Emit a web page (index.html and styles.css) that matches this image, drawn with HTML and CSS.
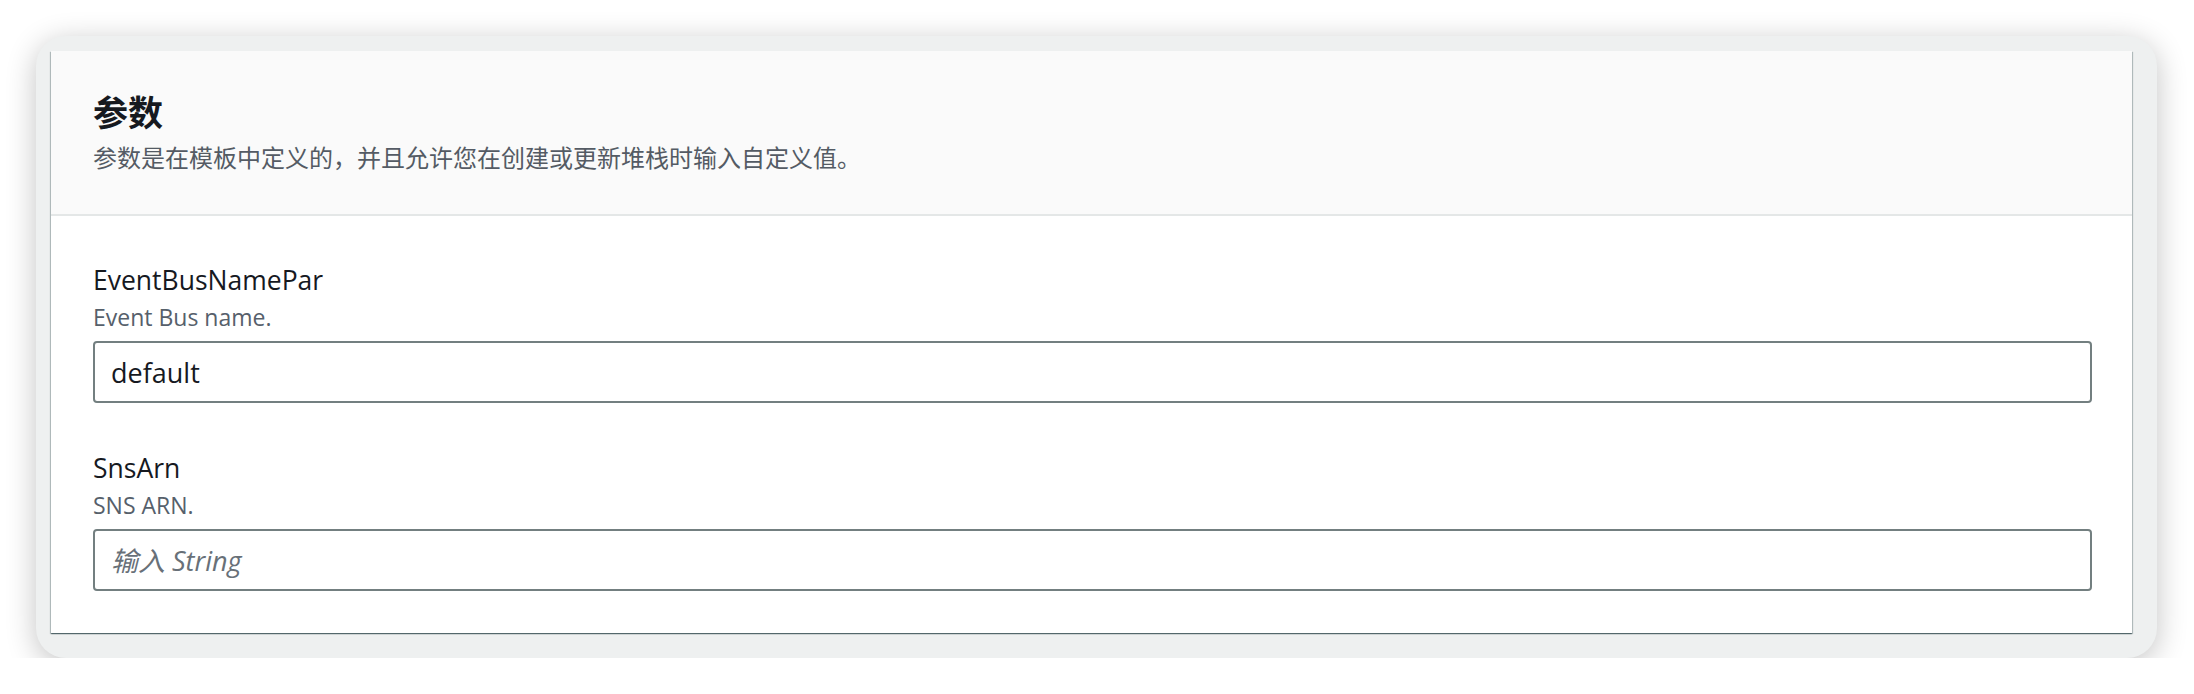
FILE: index.html
```html
<!DOCTYPE html>
<html lang="zh-CN">
<head>
<meta charset="utf-8">
<title>参数</title>
<link rel="stylesheet" href="styles.css">
</head>
<body>
<div class="frame">
  <section class="card">
    <header class="card-header">
      <h2 class="card-title">参数</h2>
      <p class="card-desc">参数是在模板中定义的，并且允许您在创建或更新堆栈时输入自定义值。</p>
    </header>
    <div class="card-body">
      <div class="field">
        <label class="field-label" for="p1">EventBusNamePar</label>
        <div class="field-desc">Event Bus name.</div>
        <input class="field-input" id="p1" type="text" value="default">
      </div>
      <div class="field">
        <label class="field-label" for="p2">SnsArn</label>
        <div class="field-desc">SNS ARN.</div>
        <input class="field-input" id="p2" type="text" placeholder="输入 String">
      </div>
    </div>
  </section>
</div>
</body>
</html>
```
FILE: styles.css
```css
html, body {
  margin: 0;
  padding: 0;
  background: #ffffff;
}

body {
  font-family: "Open Sans", "Noto Sans CJK SC", sans-serif;
  color: #16191f;
}

.frame {
  margin: 36px 37px 0 36px;
  height: 622px;
  box-sizing: border-box;
  padding: 15px 25px 25px 15px;
  background: #eef0f0;
  border-radius: 30px;
  box-shadow: 0 6px 30px rgba(0, 0, 0, 0.24);
}

.card {
  background: #ffffff;
  box-shadow: 0 1px 1px 0 rgba(0, 28, 36, 0.45),
              1px 1px 1px 0 rgba(0, 28, 36, 0.2),
              -1px 1px 1px 0 rgba(0, 28, 36, 0.2);
}

.card-header {
  background: #fafafa;
  padding: 39px 40px 42px 42px;
  border-bottom: 2px solid #e4e7e7;
}

.card-title {
  margin: 0;
  font-family: "Noto Sans CJK SC", sans-serif;
  font-size: 35px;
  line-height: 42px;
  font-weight: 700;
  color: #16191f;
}

.card-desc {
  margin: 10px 0 0;
  font-family: "Noto Sans CJK SC", sans-serif;
  font-size: 24px;
  line-height: 30px;
  color: #545b64;
}

.card-body {
  padding: 48px 40px 42px 42px;
}

.field + .field {
  margin-top: 49px;
}

.field-label {
  display: block;
  font-size: 26.5px;
  line-height: 33px;
  color: #16191f;
}

.field-desc {
  margin-top: 7px;
  font-size: 23px;
  line-height: 27px;
  color: #56606b;
}

.field-input {
  display: block;
  margin-top: 10px;
  width: 100%;
  height: 62px;
  box-sizing: border-box;
  padding: 0 16px;
  border: 2px solid #737f80;
  border-radius: 4px;
  background: #ffffff;
  font-family: "Open Sans", "Noto Sans CJK SC", sans-serif;
  font-size: 27px;
  color: #16191f;
  outline: none;
}

.field-input::placeholder {
  font-style: italic;
  color: #687078;
  opacity: 1;
}
```
